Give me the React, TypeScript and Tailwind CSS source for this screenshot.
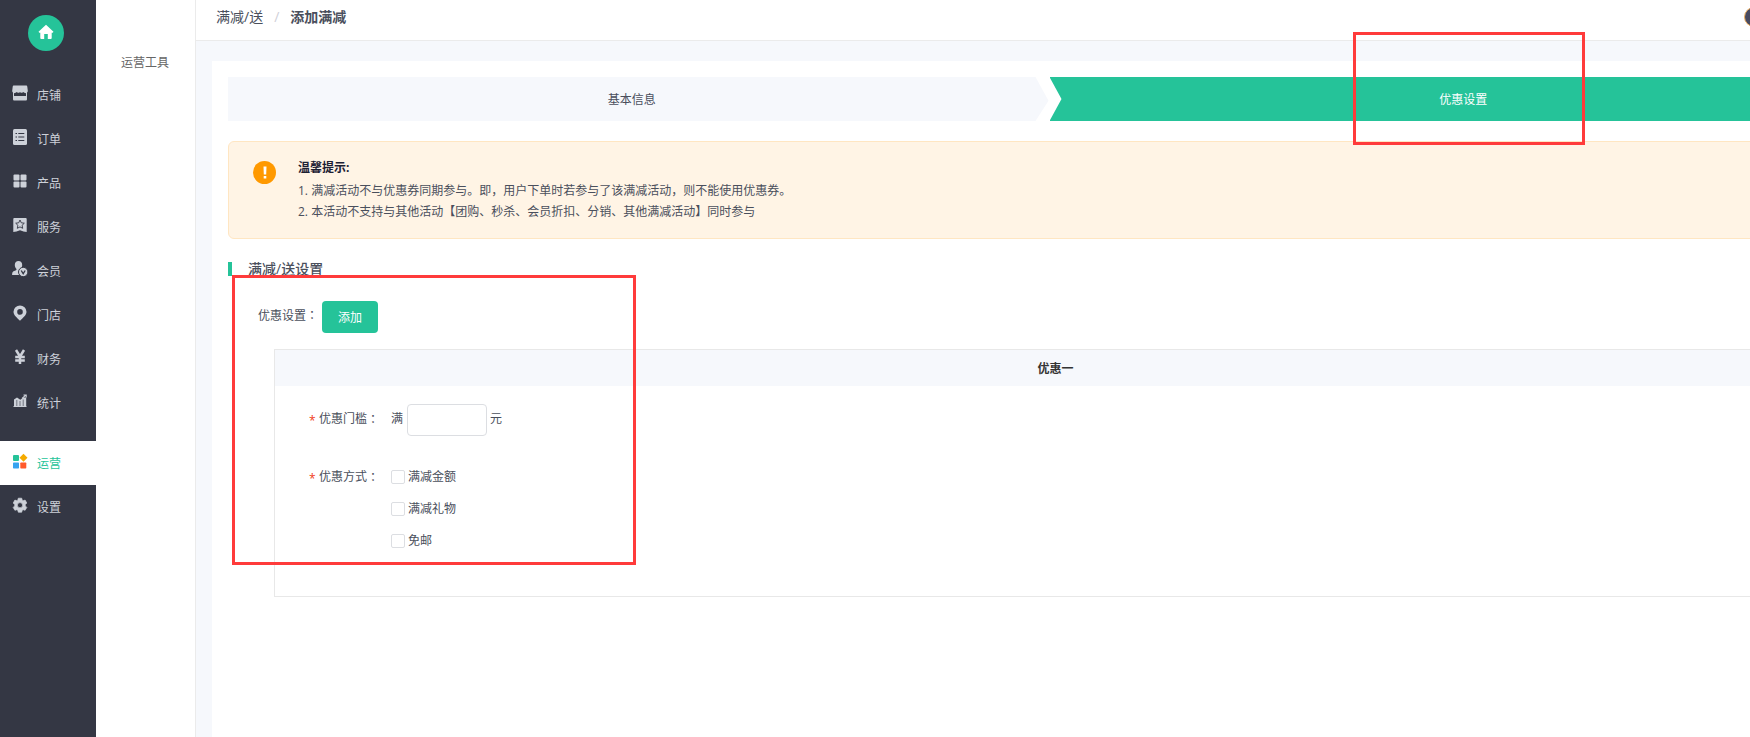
import type { ReactNode } from "react";

const Colon = () => <span className="font-['Noto_Sans_CJK_TC',sans-serif]">：</span>;

const icons: Record<string, ReactNode> = {
  shop: (
    <>
      <path fill="currentColor" d="M2 .5h12c.8 0 1.200.4 1.300 1.200l.5 4c0 .9-.3 1.500-.8 1.900v6.400c0 1-.5 1.500-1.500 1.500h-11C1.500 15.500 1 15 1 14V7.600C.5 7.200.2 6.600.2 5.700l.5-4C.8.900 1.200.5 2 .5z" />
      <path fill="#343744" d="M2 8.200c1.200 0 2-.4 2.600-1.100.8.900 2.400 1.100 3.400-.1 1 1.200 2.600 1 3.400.1.6.7 1.400 1.100 2.600 1.100v2.900H2z" />
    </>
  ),
  order: (
    <>
      <rect x="1" y="0" width="14" height="16" rx="1.500" fill="currentColor" />
      <path stroke="#343744" strokeWidth="1.100" d="M3.500 4.500h1.500M6.300 4.500h6M3.500 8h1.500M6.300 8h6M3.500 11.500h1.500M6.300 11.500h6" />
    </>
  ),
  product: (
    <>
      <rect x="1.500" y="1.500" width="6" height="6" rx="1" fill="currentColor" />
      <rect x="8.500" y="1.500" width="6" height="6" rx="1" fill="currentColor" />
      <rect x="1.500" y="8.500" width="6" height="6" rx="1" fill="currentColor" />
      <rect x="8.500" y="8.500" width="6" height="6" rx="1" fill="currentColor" />
    </>
  ),
  service: (
    <>
      <path fill="currentColor" d="M2.500 1h11c.8 0 1.200.4 1.200 1.200V15l-3.200-.6L8 13.200l-3.500 1.200L1.300 15V2.200C1.300 1.400 1.700 1 2.500 1z" />
      <path fill="none" stroke="#343744" strokeWidth=".9" strokeLinejoin="round" d="M8 3l1.300 2.800 3 .4-2.200 2.100.6 3L8 9.900l-2.700 1.400.6-3-2.200-2.100 3-.4z" />
    </>
  ),
  member: (
    <>
      <path fill="currentColor" d="M6.500 0C8.700 0 10.200 1.600 10.200 4c0 1.900-.8 3-1.700 4 .1.900.5 1.200 1.500 1.600L8 14H.6c-.5 0-.6-.4-.5-1 .2-2.400 1.400-2.800 3.400-3.500.8-.3 1-.7 1-1.500C3.500 7 2.800 5.900 2.800 4 2.800 1.600 4.300 0 6.500 0z" />
      <circle cx="11.200" cy="11" r="4.700" fill="currentColor" stroke="#343744" />
      <path fill="none" stroke="#343744" strokeWidth="1.300" d="M9.200 9.500l2 3.200 2-3.200" />
    </>
  ),
  pin: <path fill="currentColor" fillRule="evenodd" d="M8 .5a6.500 6.500 0 0 1 6.500 6.300c0 3.400-3.800 6.300-6.500 8.900-2.700-2.600-6.500-5.500-6.500-8.900A6.500 6.500 0 0 1 8 .5zm0 3.600a2.800 2.800 0 1 0 0 5.600 2.800 2.800 0 0 0 0-5.600z" />,
  yuan: <path fill="none" stroke="currentColor" strokeWidth="2.500" d="M4 1l4 6.500L12 1M8 7v8M3.200 8h9.600M3.200 11.500h9.600" />,
  stats: (
    <>
      <path fill="currentColor" d="M2 6.500l3-2 3.300 2.300L11.500 4.500h2.700V13H2zM1.500 13h13v1h-13z" />
      <path fill="none" stroke="#343744" strokeWidth=".6" d="M4.800 7v6M8 8v5M11.200 6.500V13" />
      <path fill="none" stroke="currentColor" strokeWidth="1.100" d="M10 5.500l3.800-3.300M11.500 2h2.700v2.500" />
    </>
  ),
  tools: (
    <>
      <rect x="1" y="2" width="6" height="6" rx="1" fill="#25c399" />
      <path fill="#f5ab00" d="M11.500 .8l4 4-4 4-4-4z" />
      <rect x="1" y="9.500" width="6" height="6" rx=".7" fill="#36a3f0" />
      <rect x="8.300" y="9.500" width="6" height="6" rx=".7" fill="#ff5a2b" />
    </>
  ),
  gear: <path fill="currentColor" fillRule="evenodd" stroke="currentColor" strokeWidth=".7" d="M6.300 1.200h3.400l.5 2 .9.500 2-.6 1.700 2.900-1.500 1.500v1.400l1.500 1.500-1.700 2.900-2-.6-.9.500-.5 2H6.300l-.5-2-.9-.5-2 .6-1.700-2.900 1.500-1.500V7.500L1.200 6l1.700-2.900 2 .6.900-.5zM8 5.600a2.600 2.600 0 1 0 0 5.200 2.600 2.600 0 0 0 0-5.200z" />,
};

const menu = [
  ["shop", "店铺"],
  ["order", "订单"],
  ["product", "产品"],
  ["service", "服务"],
  ["member", "会员"],
  ["pin", "门店"],
  ["yuan", "财务"],
  ["stats", "统计"],
  ["tools", "运营"],
  ["gear", "设置"],
];

function MenuItem({ icon, label }: { icon: string; label: string }) {
  const active = icon === "tools";
  return (
    <a
      href="#"
      className={
        "flex h-11 shrink-0 items-center gap-[9px] pl-3 " +
        (active ? "mt-4 bg-white text-[#25c399]" : "text-[#cdd1d9]")
      }
    >
      <svg viewBox="0 0 16 16" className="mb-1 size-4" aria-hidden="true">
        {icons[icon]}
      </svg>
      <span className="pt-[2px]">{label}</span>
    </a>
  );
}

function Required({ children }: { children: ReactNode }) {
  return (
    <span className="flex w-[82px] shrink-0 items-center">
      <span className="mt-[3px] w-[10px] text-[#f04018]">*</span>
      {children}
      <Colon />
    </span>
  );
}

export default function App() {
  return (
    <div className="relative flex h-screen overflow-hidden bg-[#f6f8fc] font-['Open_Sans','Noto_Sans_CJK_SC',sans-serif] text-xs text-[#4a4f5c]">
      <nav className="flex w-24 shrink-0 flex-col bg-[#343744]">
        <a href="#" aria-label="首页" className="mt-[15px] mb-[22px] ml-7 flex size-9 shrink-0 items-center justify-center rounded-full bg-[#25c399]">
          <svg viewBox="0 0 16 16" className="mb-[2px] size-4" aria-hidden="true">
            <path fill="#fff" d="M8 .8l7.500 7-.8.9h-1V14c0 .6-.3.900-.9.900H9.800V10H6.200v4.900h-3c-.6 0-.9-.3-.9-.9V8.700h-1l-.8-.9z" />
          </svg>
        </a>
        {menu.map(([icon, label]) => (
          <MenuItem key={icon} icon={icon} label={label} />
        ))}
      </nav>

      <aside className="w-[100px] shrink-0 border-r border-[#ebebeb] bg-white pt-[53px] pl-[25px]">
        <a href="#" className="block leading-5 text-[#666]">运营工具</a>
      </aside>

      <div className="flex min-w-0 flex-1 flex-col overflow-hidden">
        <header className="flex h-[41px] shrink-0 items-center justify-between overflow-hidden border-b border-[#ebebeb] bg-white pb-[7px] pl-5">
          <div className="flex items-center gap-[11px] text-sm">
            <a href="#">满减/送</a>
            <span className="text-[#d0d0d8]">/</span>
            <strong>添加满减</strong>
          </div>
          <span className="-mr-[14px] size-5 shrink-0 rounded-full border border-[#f0b060] bg-[#484b62]" />
        </header>

        <main className="mt-5 ml-4 -mr-[123px] flex-1 bg-white p-4">
          <ol className="flex h-11">
            <li className="flex flex-1 items-center bg-[#f6f8fc] pr-[14px] [clip-path:polygon(0_0,calc(100%-14px)_0,calc(100%-1px)_54%,calc(100%-14px)_100%,0_100%)]">
              <span className="flex-1 pt-[2px] text-center">基本信息</span>
            </li>
            <li className="flex flex-1 items-center bg-[#25c399] text-white [clip-path:polygon(0_0,100%_0,100%_100%,0_100%,12px_50%)]">
              <span className="flex-1 pt-[2px] pl-5 text-center">优惠设置</span>
            </li>
          </ol>

          <section className="mt-5 flex h-[98px] rounded-md border border-[#ffe6c2] bg-[#fff4e5] pt-4 pl-6">
            <span className="mt-[3px] flex size-[23px] items-center justify-center rounded-full bg-[#ff9900]">
              <svg viewBox="0 0 16 16" className="size-4" aria-hidden="true">
                <path fill="#fff" d="M6.500 1.500h3L9.200 9.500H6.800zM6.700 11h2.600v2.400H6.700z" />
              </svg>
            </span>
            <div className="ml-[22px] leading-[21px]">
              <h2 className="-mt-[1px] mb-[2px] font-bold text-[#1c2033]">温馨提示:</h2>
              <p>1. 满减活动不与优惠券同期参与。即，用户下单时若参与了该满减活动，则不能使用优惠券。</p>
              <p>2. 本活动不支持与其他活动【团购、秒杀、会员折扣、分销、其他满减活动】同时参与</p>
            </div>
          </section>

          <div className="mt-5 flex h-5 items-center">
            <span className="h-[14px] w-1 bg-[#25c399]" />
            <h2 className="ml-4 text-sm font-medium">满减/送设置</h2>
          </div>

          <div className="mt-[22px] flex h-8 items-center pl-[30px]">
            <span className="pb-1">优惠设置<Colon /></span>
            <button type="button" className="ml-1 h-8 w-14 rounded bg-[#25c399] pt-[2px] text-white">添加</button>
          </div>

          <section className="mt-4 mr-5 ml-[46px] h-[248px] border border-[#e8e8e8]">
            <h3 className="flex h-9 items-center justify-center bg-[#f6f8fc] pt-[2px] font-bold text-[#333]">优惠一</h3>
            <div className="mt-[18px] flex h-8 items-center pl-[34px]">
              <span className="flex items-center pb-[2px]">
                <Required>优惠门槛</Required>
                <label htmlFor="threshold">满</label>
              </span>
              <input id="threshold" className="mr-[3px] ml-1 h-8 w-20 rounded border border-[#dcdee2] bg-white px-2" />
              <span className="pb-[2px]">元</span>
            </div>
            <fieldset aria-label="优惠方式" className="mt-[25px] flex pl-[34px]">
              <div className="flex h-8"><Required>优惠方式</Required></div>
              <div>
                {["满减金额", "满减礼物", "免邮"].map((t) => (
                  <label key={t} className="flex h-8 items-center gap-[3px]">
                    <input type="checkbox" className="size-[14px] appearance-none rounded-[2px] border border-[#dcdee2] bg-white checked:bg-[#25c399]" />
                    {t}
                  </label>
                ))}
              </div>
            </fieldset>
          </section>
        </main>
      </div>

      <div className="pointer-events-none absolute top-8 left-[1353px] h-[113px] w-[232px] border-3 border-[#ff3b3b]" />
      <div className="pointer-events-none absolute top-[275px] left-[232px] h-[290px] w-[404px] border-3 border-[#ff3b3b]" />
    </div>
  );
}
